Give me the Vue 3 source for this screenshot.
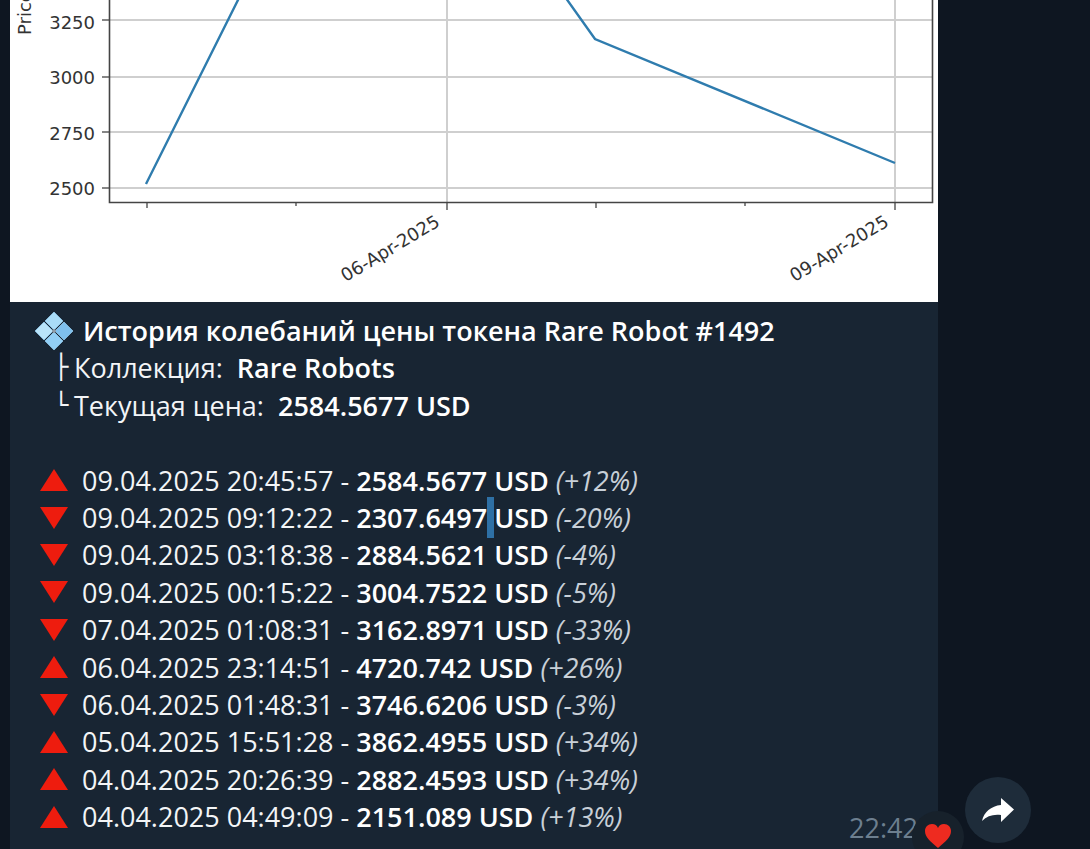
<template>
  <div class="page">
    <div class="bubble">
      <svg class="chart" viewBox="10 0 928 302" width="928" height="302">
        <g stroke="#cfcfcf" stroke-width="2">
          <line v-for="y in gridY" :key="y" x1="110" x2="933" :y1="y" :y2="y" />
          <line x1="447" x2="447" y1="0" y2="202" />
          <line x1="895" x2="895" y1="0" y2="202" />
        </g>
        <polyline points="146,184 241,-6 563,-6 595,39 895,163" fill="none" stroke="#2f7cae" stroke-width="2.4" />
        <path d="M109.5 0V202.5H932.5V0" fill="none" stroke="#444" stroke-width="1.6" />
        <g stroke="#444" stroke-width="1.3">
          <line v-for="t in axisTicks" :key="t.x" :x1="t.x" :x2="t.x" y1="203" :y2="203 + t.len" />
          <line v-for="y in gridY" :key="'t' + y" x1="102" x2="109" :y1="y" :y2="y" />
        </g>
        <g class="axis-text">
          <text v-for="l in yLabels" :key="l.text" x="95" :y="l.y" text-anchor="end">{{ l.text }}</text>
          <text transform="translate(31 35) rotate(-90)">Price</text>
          <text transform="translate(441 225) rotate(-31)" text-anchor="end">06-Apr-2025</text>
          <text transform="translate(890 225) rotate(-31)" text-anchor="end">09-Apr-2025</text>
        </g>
      </svg>

      <div class="text">
        <div class="line title">
          <svg class="gem" viewBox="0 0 40 40" width="40" height="40">
            <g stroke="#8fc6ea" stroke-width="0.8">
              <path d="M20 1l9 9-9 9-9-9z" fill="#a9dcf8" />
              <path d="M39 20l-9 9-9-9 9-9z" fill="#7fc0ee" />
              <path d="M20 39l-9-9 9-9 9 9z" fill="#92cff5" />
              <path d="M1 20l9-9 9 9-9 9z" fill="#b9e4fa" />
            </g>
            <circle cx="20" cy="20" r="2" fill="#8d9aa6" />
          </svg>
          <b>История колебаний цены токена Rare Robot #1492</b>
        </div>
        <div class="line sub"><span class="tree">├</span>Коллекция: <b>&nbsp;Rare Robots</b></div>
        <div class="line sub"><span class="tree">└</span>Текущая цена: <b>&nbsp;2584.5677 USD</b></div>
        <div class="line"></div>
        <div class="line row" v-for="(r, i) in rows" :key="r.date">
          <svg class="arrow" viewBox="0 0 28 24" width="28" height="24">
            <path v-if="r.up" d="M14 1L28 23H0z" fill="#ee1c0e" />
            <path v-else d="M0 1H28L14 23z" fill="#ee1c0e" />
          </svg>
          <span>{{ r.date }} - <b>{{ r.price }}</b><span :class="{ sel: i === 1 }">&nbsp;</span><b>USD</b> <i>({{ r.pct }})</i></span>
        </div>
      </div>

      <div class="time">22:42</div>
      <div class="reaction">
        <svg viewBox="0 0 28 26" width="28" height="26">
          <path d="M14 25C6 18 1 14 1 8 1 4 4 1 8 1c3 0 5 1.500 6 4 1-2.500 3-4 6-4 4 0 7 3 7 7 0 6-5 10-13 17z" fill="#ee2b20" />
        </svg>
      </div>
    </div>

    <button class="forward">
      <svg viewBox="0 0 34 28" width="34" height="28">
        <path d="M20 2l13 11.500L20 26v-7C12 18 6 20 1 25c2-9 9-15 19-16z" fill="#fff" />
      </svg>
    </button>
  </div>
</template>

<script setup>
const gridY = [20, 77, 132, 188]

const axisTicks = [
  { x: 147, len: 5 },
  { x: 296, len: 3 },
  { x: 447, len: 7 },
  { x: 596, len: 5 },
  { x: 745, len: 3 },
  { x: 895, len: 7 }
]

const yLabels = [
  { text: '3250', y: 29 },
  { text: '3000', y: 84 },
  { text: '2750', y: 140 },
  { text: '2500', y: 195 }
]

const rows = [
  { up: true, date: '09.04.2025 20:45:57', price: '2584.5677', pct: '+12%' },
  { up: false, date: '09.04.2025 09:12:22', price: '2307.6497', pct: '-20%' },
  { up: false, date: '09.04.2025 03:18:38', price: '2884.5621', pct: '-4%' },
  { up: false, date: '09.04.2025 00:15:22', price: '3004.7522', pct: '-5%' },
  { up: false, date: '07.04.2025 01:08:31', price: '3162.8971', pct: '-33%' },
  { up: true, date: '06.04.2025 23:14:51', price: '4720.742', pct: '+26%' },
  { up: false, date: '06.04.2025 01:48:31', price: '3746.6206', pct: '-3%' },
  { up: true, date: '05.04.2025 15:51:28', price: '3862.4955', pct: '+34%' },
  { up: true, date: '04.04.2025 20:26:39', price: '2882.4593', pct: '+34%' },
  { up: true, date: '04.04.2025 04:49:09', price: '2151.089', pct: '+13%' }
]
</script>

<style>
html,
body {
  background: #0e1621;
}
</style>

<style scoped>
.page {
  position: relative;
  width: 1090px;
  height: 849px;
  overflow: hidden;
  padding-left: 10px;
  box-sizing: border-box;
  background: #0e1621;
  font-family: "Open Sans", sans-serif;
}

.bubble {
  position: relative;
  width: 928px;
  height: 849px;
  background: #182533;
}

.chart {
  display: block;
  background: #fff;
}

.axis-text {
  font-family: "DejaVu Sans", sans-serif;
  font-size: 18px;
  fill: #333;
  stroke: none;
}

.text {
  padding: 10px 0 0 30px;
  font-size: 27px;
  line-height: 37.4px;
  color: #f3f5f7;
}

.line {
  display: flex;
  align-items: center;
  height: 37.4px;
  white-space: pre;
}

.line b {
  font-weight: 600;
  color: #fff;
}

.line i {
  color: #c8d0d8;
}

.title {
  margin-left: -6px;
  gap: 9px;
}

.sub {
  padding-left: 14px;
}

.tree {
  width: 20px;
  font-family: "DejaVu Sans", sans-serif;
  font-size: 24px;
}

.row {
  gap: 14px;
}

.sel {
  background: #2e70a5;
  padding: 2px 0;
}

.time {
  position: absolute;
  left: 839px;
  top: 809px;
  width: 68px;
  overflow: hidden;
  font-size: 27px;
  line-height: 37px;
  color: #6d7f8f;
}

.reaction {
  position: absolute;
  left: 902px;
  top: 811px;
  width: 52px;
  height: 52px;
  border-radius: 50%;
  background: #17212b;
  display: flex;
  justify-content: center;
  padding-top: 12px;
  box-sizing: border-box;
}

.forward {
  position: absolute;
  left: 965px;
  top: 777px;
  width: 66px;
  height: 66px;
  border: none;
  border-radius: 50%;
  background: #1e2c3a;
  display: flex;
  align-items: center;
  justify-content: center;
  padding: 0;
}
</style>
